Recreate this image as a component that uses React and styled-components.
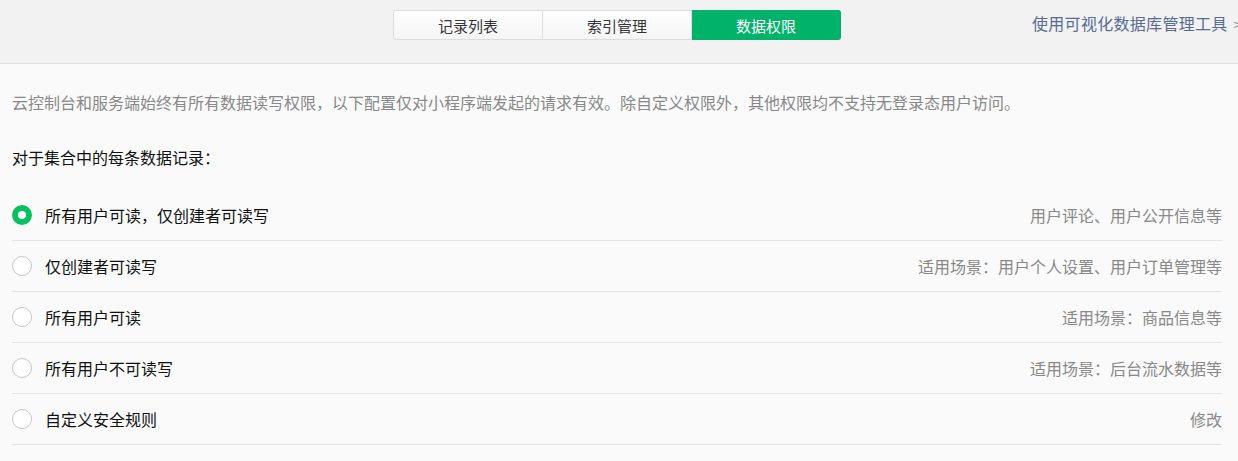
import React, { useState } from 'react'
import styled, { createGlobalStyle } from 'styled-components'

const GlobalStyle = createGlobalStyle`
  html, body {
    margin: 0;
    padding: 0;
    background: #fafafa;
    font-family: "Noto Sans CJK SC", "Noto Sans", sans-serif;
    overflow: hidden;
  }
`

const Page = styled.div`
  width: 1238px;
  min-height: 461px;
  background: #fafafa;
`

const Header = styled.div`
  display: grid;
  grid-template-columns: 393px 448px 1fr;
  height: 63px;
  background: #f2f2f2;
  border-bottom: 1px solid #e2e2e2;
`

const Tabs = styled.div`
  display: flex;
  margin-top: 10px;
  height: 30px;
`

const Tab = styled.div`
  flex: 1;
  display: flex;
  align-items: center;
  justify-content: center;
  font-size: 15px;
  cursor: pointer;
  color: ${p => (p.$active ? '#fff' : '#353535')};
  background: ${p => (p.$active ? '#00b26a' : 'linear-gradient(#fefefe, #f5f5f5)')};
  border: 1px solid ${p => (p.$active ? '#00b26a' : '#dcdcdc')};
  border-left-width: ${p => (p.$first ? '1px' : '0')};
  border-radius: ${p => (p.$first ? '3px 0 0 3px' : p.$last ? '0 3px 3px 0' : '0')};
`

const LinkCell = styled.div`
  padding-left: 191px;
  padding-top: 11px;
  white-space: nowrap;
  overflow: hidden;
`

const ToolLink = styled.a`
  font-size: 16px;
  letter-spacing: 0.3px;
  color: #576b95;
  text-decoration: none;
  cursor: pointer;
`

const Arrow = styled.span`
  margin-left: 6px;
  font-size: 14px;
  color: #8a8a8a;
`

const Content = styled.div`
  padding: 27px 16px 0 12px;
`

const Desc = styled.p`
  margin: 0;
  font-size: 16px;
  line-height: 22px;
  color: #888;
`

const Title = styled.p`
  margin: 33px 0 22px;
  font-size: 16px;
  line-height: 22px;
  color: #111;
`

const Row = styled.label`
  display: flex;
  align-items: center;
  height: 50px;
  border-bottom: 1px solid #e5e5e5;
  cursor: pointer;
`

const Radio = styled.span`
  box-sizing: border-box;
  width: 20px;
  height: 20px;
  border-radius: 50%;
  margin-right: 13px;
  flex-shrink: 0;
  background: #fff;
  border: ${p => (p.$checked ? '6px solid #07c160' : '1px solid #c6c6c6')};
`

const RowLabel = styled.span`
  font-size: 16px;
  color: #111;
`

const RowHint = styled.span`
  margin-left: auto;
  font-size: 16px;
  color: #888;
`

const tabs = ['记录列表', '索引管理', '数据权限']

const options = [
  { label: '所有用户可读，仅创建者可读写', hint: '用户评论、用户公开信息等' },
  { label: '仅创建者可读写', hint: '适用场景：用户个人设置、用户订单管理等' },
  { label: '所有用户可读', hint: '适用场景：商品信息等' },
  { label: '所有用户不可读写', hint: '适用场景：后台流水数据等' },
  { label: '自定义安全规则', hint: '修改' },
]

export default function App() {
  const [selected, setSelected] = useState(0)
  return (
    <Page>
      <GlobalStyle />
      <Header>
        <div />
        <Tabs>
          {tabs.map((t, i) => (
            <Tab key={t} $active={i === 2} $first={i === 0} $last={i === tabs.length - 1}>
              {t}
            </Tab>
          ))}
        </Tabs>
        <LinkCell>
          <ToolLink>
            使用可视化数据库管理工具<Arrow>&gt;</Arrow>
          </ToolLink>
        </LinkCell>
      </Header>
      <Content>
        <Desc>
          云控制台和服务端始终有所有数据读写权限，以下配置仅对小程序端发起的请求有效。除自定义权限外，其他权限均不支持无登录态用户访问。
        </Desc>
        <Title>对于集合中的每条数据记录：</Title>
        {options.map((o, i) => (
          <Row key={o.label} onClick={() => setSelected(i)}>
            <Radio $checked={selected === i} />
            <RowLabel>{o.label}</RowLabel>
            <RowHint>{o.hint}</RowHint>
          </Row>
        ))}
      </Content>
    </Page>
  )
}
